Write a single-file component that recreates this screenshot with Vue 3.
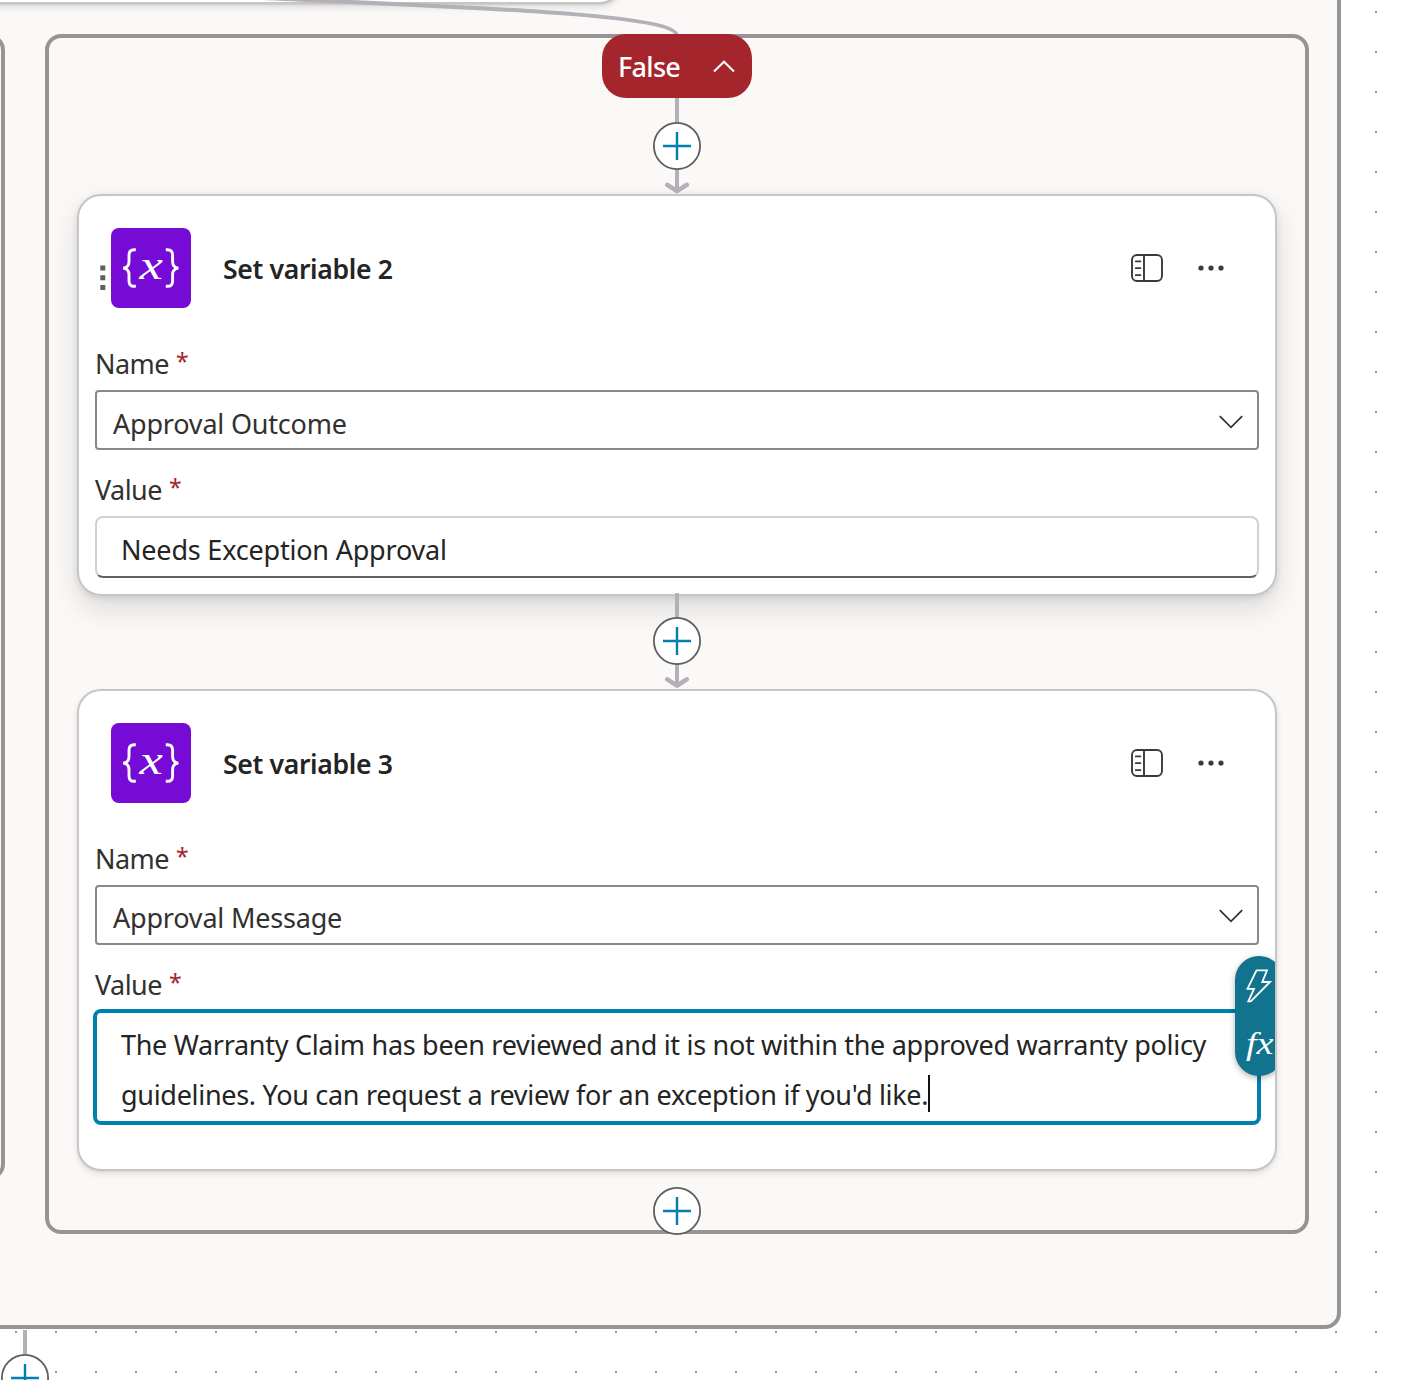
<script setup>
const cards = [
  { id: 2, title: 'Set variable 2', name: 'Approval Outcome', value: ['Needs Exception Approval'], hovered: true, focused: false },
  {
    id: 3,
    title: 'Set variable 3',
    name: 'Approval Message',
    value: [
      'The Warranty Claim has been reviewed and it is not within the approved warranty policy',
      "guidelines. You can request a review for an exception if you'd like."
    ],
    hovered: false,
    focused: true
  }
]
const addButtons = ['a1', 'a2', 'a3', 'a4']
</script>

<template>
  <main class="canvas">
    <section class="scope outer"></section>
    <section class="scope sibling"></section>
    <div class="parent-card"></div>
    <section class="scope branch"></section>

    <article v-for="card in cards" :key="card.id" class="card" :class="['card-' + card.id, { hovered: card.hovered }]">
      <header class="card-head">
        <svg v-if="card.hovered" class="grip" width="6" height="26" viewBox="0 0 6 26">
          <path d="M.3 .5h5v5h-5zM.3 10.2h5v5h-5zM.3 20h5v5h-5z" fill="#605e5c" />
        </svg>
        <svg class="brand" width="80" height="80" viewBox="0 0 80 80">
          <rect width="80" height="80" rx="8" fill="#770bd6" />
          <g fill="none" stroke="#fff" stroke-width="2.9">
            <path d="M24.8 21.7h-1.6q-5.2 0-5.2 5.4v6.4q0 6-5.8 6.6q5.8.6 5.8 6.6v6.2q0 5.4 5.2 5.4h1.6" />
            <path d="M54.8 21.7h1.6q5.2 0 5.2 5.4v6.4q0 6 5.8 6.6q-5.8.6-5.8 6.6v6.2q0 5.4-5.2 5.4h-1.6" />
          </g>
          <text transform="translate(40.2 50.5) scale(1.22 1)" text-anchor="middle" class="brand-x">x</text>
        </svg>
        <h2>{{ card.title }}</h2>
        <svg class="panel" width="32" height="28" viewBox="0 0 32 28" fill="none" stroke="#3b3a39" stroke-width="1.9">
          <rect x="1" y="1" width="30" height="26" rx="5" />
          <path d="M13 1v26" />
          <path d="M4.8 7.3h4.6M4.8 14.2h4.6M4.8 21.2h4.6" stroke-width="1.8" stroke-linecap="round" />
        </svg>
        <svg class="more" width="26" height="6" viewBox="0 0 26 6" fill="#3b3a39">
          <circle cx="3" cy="3" r="2.6" /><circle cx="13" cy="3" r="2.6" /><circle cx="23" cy="3" r="2.6" />
        </svg>
      </header>

      <div class="fields">
        <label class="label">Name<span class="star">*</span></label>
        <div class="select">
          <span>{{ card.name }}</span>
          <svg width="24" height="14" viewBox="0 0 24 14" fill="none" stroke="#323130" stroke-width="1.7">
            <path d="M.8 1.2L12 12.4L23.2 1.2" />
          </svg>
        </div>
        <label class="label second">Value<span class="star">*</span></label>
        <div class="input" :class="{ focused: card.focused }">
          <p v-for="(line, i) in card.value" :key="line">
            <span>{{ line }}</span><i v-if="card.focused && i === card.value.length - 1" class="caret"></i>
          </p>
        </div>
      </div>

      <div v-if="card.focused" class="picker-clip">
        <div class="picker">
          <svg width="26" height="34" viewBox="0 0 26 34" fill="none" stroke="#fff" stroke-width="1.8">
            <path d="M10.5 1.4H21L16.3 13H24L4.8 32.4H2.3L8 19.8H1.5z" />
          </svg>
          <span class="fx">fx</span>
        </div>
      </div>
    </article>

    <svg class="edges" width="1414" height="1380" viewBox="0 0 1414 1380" fill="none" stroke="#b3b0b8" stroke-width="4">
      <path d="M262 -2C480 8 677 14 677 36" />
      <path d="M677 98V190M677 593V685M25 1330V1360" />
      <path d="M667.3 184.8L677 191.2L686.7 184.8M667.3 679.3L677 685.7L686.7 679.3" stroke-width="4.6" stroke-linecap="round" stroke-linejoin="round" />
    </svg>

    <button class="branch-tag">
      <span>False</span>
      <svg width="22" height="13" viewBox="0 0 22 13" fill="none" stroke="#fff" stroke-width="2">
        <path d="M1 11.5L11 1.7L21 11.5" />
      </svg>
    </button>

    <svg v-for="b in addButtons" :key="b" class="add" :class="b" width="48" height="48" viewBox="0 0 48 48">
      <circle cx="24" cy="24" r="23.1" fill="#fff" stroke="#605e5c" stroke-width="1.8" />
      <path d="M24 10v28M10 24h28" stroke="#0080ae" stroke-width="2.4" />
    </svg>
  </main>
</template>

<style>
body { margin: 0; }
</style>

<style scoped>
.canvas {
  position: relative;
  width: 1414px;
  height: 1380px;
  overflow: hidden;
  background-color: #fff;
  background-image: conic-gradient(from 90deg at 38px 38px, #999 90deg, transparent 0);
  background-size: 40px 40px;
  background-position: 17px 13px;
  font-family: "Noto Sans", "Open Sans", sans-serif;
  color: #242424;
}
.scope {
  position: absolute;
  box-sizing: border-box;
  border: 4px solid #979593;
  border-radius: 16px;
  background: #faf9f8;
}
.outer { left: -40px; top: -40px; width: 1381px; height: 1369.4px; }
.sibling { left: -100px; top: 34.4px; width: 105px; height: 1146px; }
.branch { left: 45px; top: 34.4px; width: 1264px; height: 1200px; }
.parent-card {
  position: absolute;
  box-sizing: border-box;
  left: -100px;
  top: -96px;
  width: 723px;
  height: 100px;
  border: 2px solid #c8c6c4;
  border-radius: 24px;
  background: #fff;
  box-shadow: 0 3px 7px rgba(0, 0, 0, .13), 0 1px 2px rgba(0, 0, 0, .1);
}
.card {
  position: absolute;
  left: 77px;
  box-sizing: border-box;
  width: 1200px;
  border: 2px solid #c8c6c4;
  border-radius: 24px;
  background: #fff;
  box-shadow: 0 3px 7px rgba(0, 0, 0, .1), 0 1px 2px rgba(0, 0, 0, .06);
}
.card-2 { top: 194.4px; height: 401.3px; }
.card-3 { top: 688.9px; height: 482px; }
.card.hovered { box-shadow: 0 13px 29px rgba(0, 0, 0, .12), 0 2px 7px rgba(0, 0, 0, .1); }
.card-head {
  position: relative;
  display: flex;
  align-items: center;
  height: 80px;
  padding: 32px 51px 0 32px;
}
.grip { position: absolute; left: 21px; top: 68.3px; }
.brand { display: block; flex: none; }
.brand-x { font: italic 43px "Liberation Serif", serif; fill: #fff; }
h2 {
  flex: 1;
  margin: 2px 0 0 32px;
  font-size: 26.6px;
  line-height: 40px;
  font-weight: 600;
  letter-spacing: -.35px;
}
.panel { margin-right: 35px; }
.fields { padding: 0 16px; }
.label {
  display: flex;
  height: 36px;
  margin-top: 38px;
  padding-bottom: 8px;
  font-size: 27px;
  line-height: 36px;
  color: #323130;
  letter-spacing: -.55px;
}
.label.second { margin-top: 22px; }
.star { margin: -3px 0 0 7px; color: #a4262c; font-size: 23px; }
.select {
  display: flex;
  box-sizing: border-box;
  align-items: center;
  justify-content: space-between;
  height: 60px;
  padding: 6px 14px 0 16px;
  border: 2px solid #8a8886;
  border-radius: 4px;
  font-size: 27px;
  letter-spacing: -.2px;
  color: #323130;
}
.select svg { margin-top: -3px; }
.input {
  box-sizing: border-box;
  height: 62px;
  padding: 7px 0 0 24px;
  border: 2px solid #d1d1d1;
  border-bottom-color: #616161;
  border-radius: 8px;
  font-size: 27px;
  line-height: 50px;
}
.input p { display: flex; align-items: center; height: 50px; margin: 0; white-space: nowrap; letter-spacing: -.2px; }
.input.focused {
  height: 116px;
  margin: -2px -2px 0;
  padding: 7px 0 0 24px;
  border: 4px solid #0080ae;
}
.input.focused p { letter-spacing: -.3px; }
.caret { width: 2px; height: 37px; margin-top: -3px; background: #111; }
.picker-clip {
  position: absolute;
  inset: 0;
  overflow: hidden;
  border-radius: 22px;
}
.picker {
  position: absolute;
  left: 1156px;
  top: 265px;
  display: flex;
  flex-direction: column;
  box-sizing: border-box;
  width: 48px;
  height: 120px;
  padding: 13px 0 0 11px;
  border-radius: 24px;
  background: #11738d;
  box-shadow: 0 2px 6px rgba(0, 0, 0, .3);
  color: #fff;
}
.fx {
  align-self: flex-start;
  margin-top: 21px;
  font: italic 31px/40px "Liberation Serif", serif;
  transform: scaleX(1.23);
  transform-origin: 0 0;
}
.edges { position: absolute; left: 0; top: 0; }
.branch-tag {
  position: absolute;
  left: 602px;
  top: 34.4px;
  display: flex;
  box-sizing: border-box;
  align-items: center;
  justify-content: space-between;
  width: 150px;
  height: 64px;
  padding: 1px 17px 0 16px;
  border: 0;
  border-radius: 24px;
  background: #a4262c;
  color: #fff;
  font: 500 27px "Noto Sans", sans-serif;
  letter-spacing: -.7px;
}
.add { position: absolute; left: 653px; }
.a1 { top: 122px; }
.a2 { top: 617px; }
.a3 { top: 1187px; }
.a4 { left: 1px; top: 1354px; }
</style>
